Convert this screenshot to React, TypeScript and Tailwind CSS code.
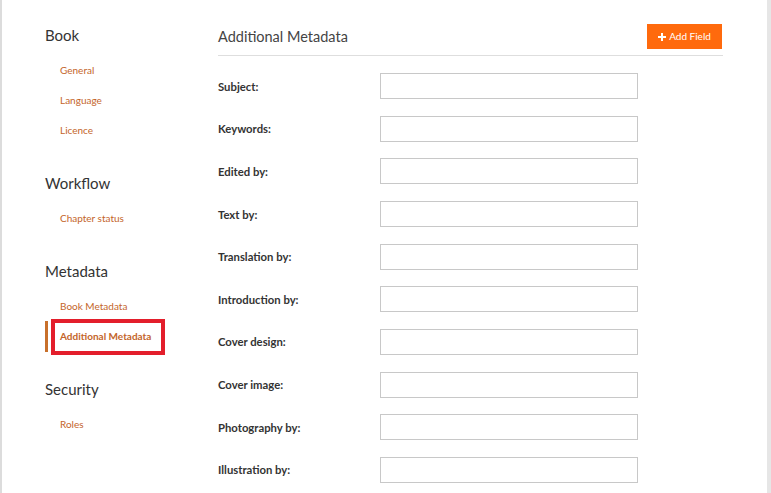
import { Fragment } from 'react';

const sections = [
  { title: 'Book', links: ['General', 'Language', 'Licence'] },
  { title: 'Workflow', links: ['Chapter status'] },
  { title: 'Metadata', links: ['Book Metadata', 'Additional Metadata'] },
  { title: 'Security', links: ['Roles'] },
];

const fields = [
  'Subject:',
  'Keywords:',
  'Edited by:',
  'Text by:',
  'Translation by:',
  'Introduction by:',
  'Cover design:',
  'Cover image:',
  'Photography by:',
  'Illustration by:',
];

const ACTIVE = 'Additional Metadata';

export default function App() {
  return (
    <div className="h-[493px] w-[771px] overflow-hidden bg-white font-['Lato','Open_Sans',sans-serif] flex border-l-2 border-[#dcdcdc]">
      {/* Sidebar */}
      <aside className="w-[216px] shrink-0 pl-[43px] pt-[25px] flex flex-col gap-[28px]">
        {sections.map((section) => (
          <div key={section.title}>
            <div className="h-[20px] leading-[20px] text-[15px] text-[#333]">{section.title}</div>
            <div className="mt-[10px] flex flex-col">
              {section.links.map((link) => {
                const active = link === ACTIVE;
                return (
                  <div key={link} className="relative h-[30px] flex items-center">
                    {active && (
                      <>
                        <span className="absolute left-0 top-0 h-[31px] w-[3px] bg-[#c8702b]" />
                        <span className="absolute left-[6px] top-[-2px] h-[36px] w-[114px] border-[4px] border-[#e31e2b]" />
                      </>
                    )}
                    <a
                      href="#"
                      className={`pl-[15px] text-[10px] text-[#c4652a] ${active ? 'font-bold' : ''}`}
                    >
                      {link}
                    </a>
                  </div>
                );
              })}
            </div>
          </div>
        ))}
      </aside>

      {/* Main */}
      <main className="w-[505px] shrink-0 pt-[24px]">
        <div className="flex items-start justify-between pb-[6px] border-b border-[#dedede]">
          <h2 className="h-[25px] leading-[25px] text-[14.5px] text-[#444]">Additional Metadata</h2>
          <button className="mr-[1px] h-[25px] w-[75px] bg-[#ff6a0d] text-white text-[10px] flex items-center justify-center gap-[3px]">
            <svg width="8" height="8" viewBox="0 0 8 8">
              <path d="M3 0h2v3h3v2H5v3H3V5H0V3h3z" fill="white" />
            </svg>
            Add Field
          </button>
        </div>

        <div className="mt-[17px] grid grid-cols-[162px_258px] gap-y-[16.67px]">
          {fields.map((field) => (
            <Fragment key={field}>
              <label className="h-[26px] flex items-center pt-[2px] text-[11.3px] font-bold text-[#333]">{field}</label>
              <input className="h-[26px] w-[258px] border border-[#c8c8c8] bg-white outline-none" />
            </Fragment>
          ))}
        </div>
      </main>

      <div className="ml-auto w-[4px] h-full bg-[#e6e6e6]" />
    </div>
  );
}
